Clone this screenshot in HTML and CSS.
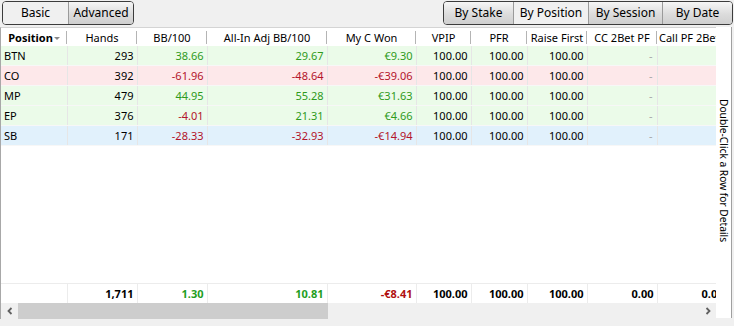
FILE: index.html
```html
<!DOCTYPE html>
<html lang="en">
<head>
  <meta charset="UTF-8">
  <title>Results by Position</title>
  <link rel="stylesheet" href="styles.css">
</head>
<body>
  <div class="toolbar">
    <div class="btn-group">
      <button class="seg flat" type="button">Basic</button>
      <button class="seg" type="button">Advanced</button>
    </div>
    <div class="btn-group">
      <button class="seg w70" type="button">By Stake</button>
      <button class="seg flat w75" type="button">By Position</button>
      <button class="seg w74" type="button">By Session</button>
      <button class="seg w71" type="button">By Date</button>
    </div>
  </div>

  <div class="main">
    <div class="grid">
      <div class="grid-clip">
        <table class="stats">
          <colgroup>
            <col style="width:66px"><col style="width:70px"><col style="width:70px"><col style="width:120px">
            <col style="width:89px"><col style="width:55px"><col style="width:56px"><col style="width:60px">
            <col style="width:70px"><col style="width:70px">
          </colgroup>
          <thead>
            <tr>
              <th class="sorted">Position<span class="caret"></span></th>
              <th>Hands</th><th>BB/100</th><th>All-In Adj BB/100</th><th>My C Won</th>
              <th>VPIP</th><th>PFR</th><th>Raise First</th><th>CC 2Bet PF</th><th class="left">Call PF 2Bet</th>
            </tr>
          </thead>
          <tbody>
            <tr class="win">
              <td class="name">BTN</td><td>293</td><td class="pos">38.66</td><td class="pos">29.67</td><td class="pos">€9.30</td>
              <td>100.00</td><td>100.00</td><td>100.00</td><td class="dash">-</td><td class="dash">-</td>
            </tr>
            <tr class="loss">
              <td class="name">CO</td><td>392</td><td class="neg">-61.96</td><td class="neg">-48.64</td><td class="neg">-€39.06</td>
              <td>100.00</td><td>100.00</td><td>100.00</td><td class="dash">-</td><td class="dash">-</td>
            </tr>
            <tr class="win">
              <td class="name">MP</td><td>479</td><td class="pos">44.95</td><td class="pos">55.28</td><td class="pos">€31.63</td>
              <td>100.00</td><td>100.00</td><td>100.00</td><td class="dash">-</td><td class="dash">-</td>
            </tr>
            <tr class="win">
              <td class="name">EP</td><td>376</td><td class="neg">-4.01</td><td class="pos">21.31</td><td class="pos">€4.66</td>
              <td>100.00</td><td>100.00</td><td>100.00</td><td class="dash">-</td><td class="dash">-</td>
            </tr>
            <tr class="blind">
              <td class="name">SB</td><td>171</td><td class="neg">-28.33</td><td class="neg">-32.93</td><td class="neg">-€14.94</td>
              <td>100.00</td><td>100.00</td><td>100.00</td><td class="dash">-</td><td class="dash">-</td>
            </tr>
          </tbody>
        </table>

        <table class="stats totals">
          <colgroup>
            <col style="width:66px"><col style="width:70px"><col style="width:70px"><col style="width:120px">
            <col style="width:89px"><col style="width:55px"><col style="width:56px"><col style="width:60px">
            <col style="width:70px"><col style="width:70px">
          </colgroup>
          <tr>
            <td></td><td>1,711</td><td class="pos">1.30</td><td class="pos">10.81</td><td class="neg">-€8.41</td>
            <td>100.00</td><td>100.00</td><td>100.00</td><td>0.00</td><td>0.00</td>
          </tr>
        </table>
      </div>

      <div class="hscroll">
        <div class="sb-btn">
          <svg width="8" height="8" viewBox="0 0 8 8"><path d="M5.5 1 L2.5 4 L5.5 7" fill="none" stroke="#606060" stroke-width="1.8"/></svg>
        </div>
        <div class="sb-track"><div class="sb-thumb"></div></div>
        <div class="sb-btn">
          <svg width="8" height="8" viewBox="0 0 8 8"><path d="M2.5 1 L5.5 4 L2.5 7" fill="none" stroke="#606060" stroke-width="1.8"/></svg>
        </div>
      </div>
    </div>

    <div class="side">
      <span class="side-text">Double-Click a Row for Details</span>
    </div>
  </div>
</body>
</html>
```

FILE: styles.css
```css
body {
  margin: 0;
  width: 734px;
  height: 326px;
  overflow: hidden;
  background: #f0f0f0;
  font-family: "Noto Sans", "Open Sans", sans-serif;
  font-size: 11px;
  color: #000;
}

.toolbar {
  height: 27px;
  display: flex;
  justify-content: space-between;
  align-items: flex-start;
  padding: 1px 1px 0 2px;
  box-sizing: border-box;
}
.btn-group {
  display: flex;
  height: 22px;
  border: 1px solid #3c3c3c;
  border-radius: 4px;
  overflow: hidden;
  background: #fff;
}
.seg {
  font-family: inherit;
  font-size: 12px;
  width: 65px;
  padding: 0 0 1px;
  border: none;
  border-left: 1px solid #9a9a9a;
  background: linear-gradient(#f6f6f6, #dcdcdc 55%, #cfcfcf);
  color: #000;
}
.seg:first-child {
  border-left: none;
}
.seg.flat {
  background: #f0f0f0;
}
.w70 { width: 69px; }
.w75 { width: 75px; }
.w74 { width: 74px; }
.w71 { width: 70px; }

.main {
  display: flex;
  height: 292px;
}
.grid {
  width: 715px;
  display: flex;
  flex-direction: column;
  background: #fff;
  border-top: 1px solid #d4d4d4;
  border-left: 1px solid #a8a8a8;
}
.grid-clip {
  flex: 1;
  overflow: hidden;
  display: flex;
  flex-direction: column;
  justify-content: space-between;
}
.stats {
  table-layout: fixed;
  border-collapse: collapse;
  width: 725px;
}
.stats th {
  height: 18px;
  padding: 0;
  font-weight: normal;
  text-align: center;
  white-space: nowrap;
  position: relative;
}
.stats th::after {
  content: "";
  position: absolute;
  right: 0;
  top: 3px;
  bottom: 2px;
  border-right: 1px solid #b4b4b4;
}
.stats th.sorted {
  font-weight: bold;
}
.stats th.left {
  text-align: left;
  padding-left: 2px;
}
.caret {
  display: inline-block;
  width: 0;
  height: 0;
  margin-left: 1px;
  border-left: 3px solid transparent;
  border-right: 3px solid transparent;
  border-top: 3px solid #888;
  vertical-align: middle;
}
.stats td {
  height: 19px;
  padding: 0 3px 0 0;
  text-align: right;
  white-space: nowrap;
  border-right: 1px solid #e6e6e6;
  border-bottom: 1px solid #f7f7f7;
}
.stats td.name {
  text-align: left;
  padding-left: 3px;
}
.stats td.dash {
  color: #a8a8a8;
  padding-right: 4px;
}
tr.win td { background: #ebfbe9; }
tr.loss td { background: #fde8ea; }
tr.blind td { background: #e1f1fc; }
.pos { color: #2f9a1c; }
.neg { color: #b3142a; }

.totals td {
  height: 19px;
  font-weight: bold;
  border-top: 1px solid #ececec;
  border-right: 1px solid #ececec;
  border-bottom: none;
}
.totals .pos { color: #1e9e1e; }
.totals .neg { color: #b01010; }

.hscroll {
  display: flex;
  height: 16px;
  background: #f0f0f0;
}
.sb-btn {
  width: 17px;
  display: flex;
  align-items: center;
  justify-content: center;
}
.sb-track {
  flex: 1;
  display: flex;
}
.sb-thumb {
  width: 310px;
  background: #cdcdcd;
}

.side {
  width: 15px;
  background: #fff;
  border-right: 1px solid #a0a0a0;
  height: 291px;
  display: flex;
  align-items: center;
  justify-content: center;
}
.side-text {
  writing-mode: vertical-rl;
  white-space: nowrap;
  font-size: 10.2px;
  margin-top: -4px;
}
```
